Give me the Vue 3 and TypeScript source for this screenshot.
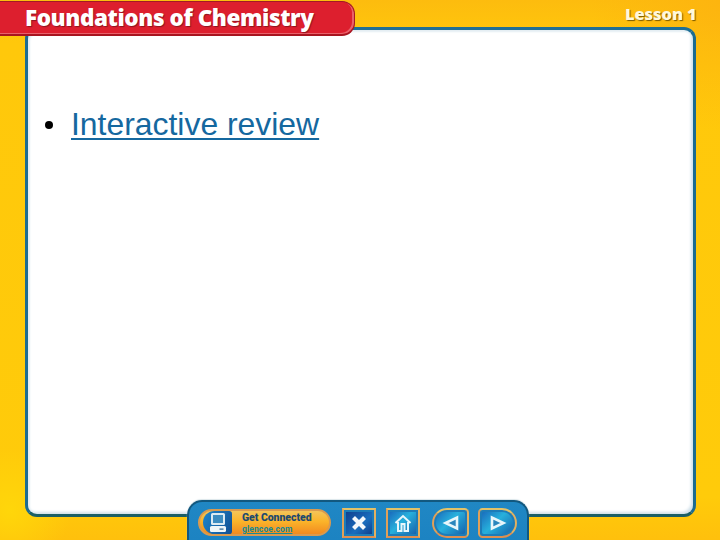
<script setup lang="ts">
const bullets: string[] = ['Interactive review']
</script>

<template>
  <div class="slide">
    <header class="title-tab">
      <h1>Foundations of Chemistry</h1>
    </header>
    <div class="lesson">Lesson 1</div>
    <main class="panel">
      <ul>
        <li v-for="b in bullets" :key="b"><a href="#">{{ b }}</a></li>
      </ul>
    </main>
    <nav class="toolbar">
      <div class="connected">
        <span class="pc">
          <svg width="20" height="21" viewBox="0 0 20 21">
            <rect x="3" y="1" width="14" height="12" rx="1.5" fill="#dbeaf2" />
            <rect x="5" y="3" width="10" height="8" fill="#3c8cc0" />
            <rect x="2" y="14" width="16" height="6" rx="1.5" fill="#eef5f8" />
            <rect x="11.5" y="16.5" width="4" height="1.2" fill="#27628c" />
          </svg>
        </span>
        <span class="label">
          <b>Get Connected</b>
          <i>glencoe.com</i>
        </span>
      </div>
      <button class="square close" aria-label="Close">
        <span class="face">
          <svg width="18" height="18" viewBox="0 0 18 18">
            <path d="M3.5 3.5 14.5 14.5M14.5 3.5 3.5 14.5" stroke="#f4f8fb" stroke-width="4.2" />
          </svg>
        </span>
      </button>
      <button class="square home" aria-label="Home">
        <span class="face">
          <svg width="20" height="20" viewBox="0 0 20 20" fill="none" stroke="#e8f6fb" stroke-width="2">
            <path d="M2.5 10 10 3l7.5 7" />
            <path d="M5 9v9h3.5v-7h3v7H15V9" />
          </svg>
        </span>
      </button>
      <button class="round left" aria-label="Previous">
        <span class="face">
          <svg width="18" height="18" viewBox="0 0 18 18">
            <path d="M15 3.5v11L3.5 9z" fill="#2a86bd" stroke="#e8f6fb" stroke-width="2.6" />
          </svg>
        </span>
      </button>
      <button class="round right" aria-label="Next">
        <span class="face">
          <svg width="18" height="18" viewBox="0 0 18 18">
            <path d="M3 3.5v11L14.5 9z" fill="#2a86bd" stroke="#e8f6fb" stroke-width="2.6" />
          </svg>
        </span>
      </button>
    </nav>
  </div>
</template>

<style>
html, body { margin: 0; padding: 0; }
</style>

<style scoped>
.slide {
  position: relative;
  width: 720px;
  height: 540px;
  box-sizing: border-box;
  padding: 27px 24px 23px 25px;
  overflow: hidden;
  background:
    radial-gradient(circle at 10px 510px, #ffd60a 0, rgba(255, 214, 10, 0) 60px),
    radial-gradient(circle at 720px 0, #fdb50f 0, rgba(253, 181, 15, 0) 130px),
    linear-gradient(180deg, #fdbc0e 0, #ffc80b 8%, #ffcb0a 92%, #ffc00c 100%);
}
.title-tab {
  position: absolute;
  left: 0;
  top: 1px;
  width: 355px;
  height: 35px;
  box-sizing: border-box;
  padding-left: 25px;
  background: #dd1f2e;
  border: 1px solid #a31a26;
  border-left: 0;
  border-bottom: 2px solid #a8141f;
  border-radius: 0 13px 13px 0;
  box-shadow: inset -2px -1px 0 #e9606a;
  z-index: 2;
}
.title-tab h1 {
  margin: 0;
  font: 800 22.5px/32px "Open Sans", sans-serif;
  letter-spacing: -0.43px;
  color: #fff;
  white-space: nowrap;
  text-shadow: 1px 1px 1px #8d1420;
}
.lesson {
  position: absolute;
  left: 625px;
  top: 2px;
  font: 800 16.5px/24px "Open Sans", sans-serif;
  letter-spacing: -0.1px;
  color: #fff8dc;
  white-space: nowrap;
  text-shadow: 1px 1px 1px #7a5a00;
}
.panel {
  height: 100%;
  box-sizing: border-box;
  background: #fff;
  border: 3px solid #1c6b90;
  border-top-color: #1f6f95;
  border-bottom-color: #1b5f66;
  border-radius: 12px;
  box-shadow: inset 2px 2px 2px #e4eef3, inset -2px -2px 3px #d0e0ea;
  padding: 76px 0 0 17px;
}
.panel ul {
  list-style: none;
  margin: 0;
  padding: 0;
}
.panel li {
  position: relative;
  padding-left: 26px;
  font: 400 31.9px/37px "Liberation Sans", Arial, sans-serif;
  color: #000;
}
.panel li::before {
  content: "";
  position: absolute;
  left: 0;
  top: 15px;
  width: 8px;
  height: 8px;
  border-radius: 50%;
  background: #000;
}
.panel a {
  color: #15689f;
  text-decoration: underline;
  text-decoration-thickness: 2px;
  text-underline-offset: 3px;
}
.toolbar {
  position: absolute;
  left: 187px;
  top: 500px;
  width: 342px;
  height: 40px;
  box-sizing: border-box;
  padding: 7px 0 0 9px;
  display: flex;
  align-items: flex-start;
  background: linear-gradient(180deg, #2087c4 0, #1c83c2 100%);
  border: solid #12587f;
  border-width: 2px 2px 0 2px;
  border-radius: 15px 15px 0 0;
  box-shadow: 0 -1px 1px #dbe6ea;
}
.connected {
  display: flex;
  align-items: center;
  width: 133px;
  height: 27px;
  box-sizing: border-box;
  margin-right: 11px;
  padding-left: 3px;
  border-radius: 14px;
  background: linear-gradient(180deg, #f3c55a 0, #fbb42a 45%, #f18a20 100%);
  border: 2px solid #d99a4f;
  overflow: hidden;
  flex: none;
}
.pc {
  width: 29px;
  height: 23px;
  margin-right: 10px;
  display: flex;
  align-items: center;
  justify-content: center;
  border-radius: 12px 3px 3px 12px;
  background: linear-gradient(120deg, #1f86cc, #114f93);
  flex: none;
}
.label {
  display: flex;
  flex-direction: column;
  font-family: Roboto, sans-serif;
}
.label b {
  font-size: 10.5px;
  line-height: 12px;
  font-weight: 900;
  letter-spacing: -0.05px;
  color: #1d4a70;
  white-space: nowrap;
}
.label i {
  font-size: 8.5px;
  line-height: 10px;
  font-style: normal;
  font-weight: 700;
  letter-spacing: 0.1px;
  color: #178a96;
  text-decoration: underline;
  white-space: nowrap;
}
button {
  padding: 2px;
  border: 2px solid;
  border-color: #e3c268 #e3b060 #df8f50 #e0a058;
  background: #1d7cb8;
  height: 30px;
  box-sizing: border-box;
  flex: none;
  display: flex;
  align-items: stretch;
  margin-top: -1px;
}
.face {
  flex: 1;
  display: flex;
  align-items: center;
  justify-content: center;
  background: linear-gradient(135deg, #1a6dbd 0, #27b0dc 45%, #1763ac 100%);
}
.square { width: 34px; margin-right: 10px; }
.close .face { background: linear-gradient(135deg, #10408f 0, #1a6dbd 60%, #0f3f8d 100%); }
.home { margin-right: 12px; }
.round { width: 37px; margin-right: 9px; }
.round.right { width: 39px; }
.round.left { border-radius: 16px 5px 5px 16px; }
.round.left .face { border-radius: 13px 2px 2px 13px; }
.round.right { border-radius: 5px 16px 16px 5px; }
.round.right .face { border-radius: 2px 13px 13px 2px; }
</style>
